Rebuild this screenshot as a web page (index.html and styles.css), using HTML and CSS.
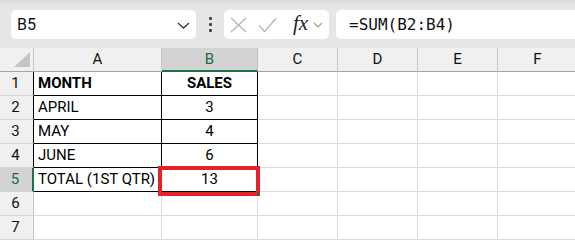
FILE: index.html
```html
<!DOCTYPE html>
<html>
<head>
<meta charset="utf-8">
<link rel="stylesheet" href="styles.css">
</head>
<body>
<div class="toolbar">
  <div class="namebox">
    <span class="name">B5</span>
    <svg class="chev" width="13" height="7" viewBox="0 0 13 7"><path d="M1 1 L6.5 6 L12 1" fill="none" stroke="#3a3a3a" stroke-width="1.3"/></svg>
  </div>
  <div class="dots"><span></span><span></span><span></span></div>
  <div class="fxbox">
    <svg class="ico" width="17" height="16" viewBox="0 0 17 16"><path d="M1 1 L16 15 M16 1 L1 15" stroke="#b4b4b4" stroke-width="1.3" fill="none"/></svg>
    <svg class="ico check" width="19" height="16" viewBox="0 0 19 16"><path d="M1 8.5 L6.5 14.5 L18 1.5" stroke="#b4b4b4" stroke-width="1.3" fill="none"/></svg>
    <span class="fx">fx</span>
    <svg class="chev2" width="10" height="6" viewBox="0 0 10 6"><path d="M1 1 L5 5 L9 1" fill="none" stroke="#9a9a9a" stroke-width="1.1"/></svg>
  </div>
  <div class="formula">=SUM(B2:B4)</div>
</div>
<div class="sheet">
  <div class="corner"><svg width="16" height="15" viewBox="0 0 16 15"><path d="M16 0 L16 15 L0 15 Z" fill="#c4c4c4"/></svg></div>
  <div class="ch">A</div>
  <div class="ch sel">B</div>
  <div class="ch">C</div>
  <div class="ch">D</div>
  <div class="ch">E</div>
  <div class="ch last">F</div>

  <div class="rh tb">1</div>
  <div class="c t a1 b">MONTH</div>
  <div class="c t b1 b ctr">SALES</div>
  <div class="c"></div><div class="c"></div><div class="c"></div><div class="c"></div>

  <div class="rh tb">2</div>
  <div class="c t">APRIL</div>
  <div class="c t ctr">3</div>
  <div class="c"></div><div class="c"></div><div class="c"></div><div class="c"></div>

  <div class="rh tb">3</div>
  <div class="c t">MAY</div>
  <div class="c t ctr">4</div>
  <div class="c"></div><div class="c"></div><div class="c"></div><div class="c"></div>

  <div class="rh tb">4</div>
  <div class="c t">JUNE</div>
  <div class="c t ctr">6</div>
  <div class="c"></div><div class="c"></div><div class="c"></div><div class="c"></div>

  <div class="rh rsel">5</div>
  <div class="c t">TOTAL (1ST QTR)</div>
  <div class="c t ctr active">13<span class="redbox"></span><span class="handle"></span></div>
  <div class="c"></div><div class="c"></div><div class="c"></div><div class="c"></div>

  <div class="rh">6</div>
  <div class="c"></div><div class="c"></div><div class="c"></div><div class="c"></div><div class="c"></div><div class="c"></div>

  <div class="rh">7</div>
  <div class="c"></div><div class="c"></div><div class="c"></div><div class="c"></div><div class="c"></div><div class="c"></div>
</div>
</body>
</html>
```
FILE: styles.css
```css
html, body {
  margin: 0;
  padding: 0;
  background: #ffffff;
  overflow: hidden;
}
body {
  width: 575px;
  height: 240px;
  font-family: Roboto, "Liberation Sans", sans-serif;
}
.toolbar {
  height: 48px;
  box-sizing: border-box;
  background: linear-gradient(#d9d7d9 0px, #e4e2e4 3px, #e7e5e7 6px, #e7e5e7 100%);
  display: flex;
  align-items: flex-start;
  padding: 10px 0 0 11px;
  overflow: hidden;
}
.namebox {
  width: 185px;
  height: 29px;
  box-sizing: border-box;
  background: #fff;
  border-radius: 5px;
  display: flex;
  align-items: center;
  justify-content: space-between;
  padding: 0 6px 0 6px;
}
.name {
  font-size: 16px;
  color: #111;
}
.chev { margin-top: 1px; }
.dots {
  width: 28px;
  height: 29px;
  display: flex;
  flex-direction: column;
  align-items: center;
  justify-content: center;
  gap: 3px;
}
.dots span {
  width: 3px;
  height: 3px;
  background: #444;
  border-radius: 1px;
}
.fxbox {
  width: 105px;
  height: 29px;
  box-sizing: border-box;
  background: #fff;
  border-radius: 5px;
  display: flex;
  align-items: center;
  padding-left: 6px;
}
.ico { display: block; }
.check { margin-left: 11px; }
.fx {
  font-family: "Liberation Serif", "DejaVu Serif", serif;
  font-style: italic;
  font-size: 21px;
  color: #222;
  margin-left: 16px;
  margin-top: -3px;
  letter-spacing: 0px;
}
.chev2 { margin-left: 5px; margin-top: 1px; }
.formula {
  flex: 1;
  margin-left: 7px;
  margin-right: -10px;
  height: 29px;
  background: #fff;
  border-radius: 5px;
  box-sizing: border-box;
  padding-left: 13px;
  font-family: "DejaVu Sans Mono", "Liberation Mono", monospace;
  font-size: 16px;
  line-height: 29px;
  color: #111;
}
.sheet {
  display: grid;
  grid-template-columns: 34px 128px 96px 80px 80px 80px 80px;
  grid-template-rows: repeat(8, 24px);
  font-size: 15px;
  color: #000;
}
.sheet > div {
  box-sizing: border-box;
}
.corner {
  background: #f0f0f0;
  border-right: 1px solid #c6c6c6;
  border-bottom: 1px solid #a3a3a3;
  display: flex;
  align-items: flex-end;
  justify-content: flex-end;
  padding: 0 3px 4px 0;
}
.corner svg { display: block; }
.ch {
  background: #f0f0f0;
  border-right: 1px solid #c6c6c6;
  border-bottom: 1px solid #a3a3a3;
  text-align: center;
  line-height: 23px;
  font-size: 15px;
  color: #111;
}
.ch.sel {
  background: #d3d3d3;
  color: #1e6b42;
  border-bottom: 2px solid #1e7145;
  border-right-color: #bdbdbd;
}
.rh {
  background: #f0f0f0;
  border-right: 1px solid #c6c6c6;
  border-bottom: 1px solid #d4d4d4;
  text-align: center;
  line-height: 23px;
  padding-right: 2px;
  font-size: 15px;
  color: #111;
}
.rh.tb { border-right-color: #000; }
.rh.rsel {
  background: #d3d3d3;
  color: #1e6b42;
  border-right: 2px solid #1e7145;
}
.c {
  border-right: 1px solid #dadada;
  border-bottom: 1px solid #dadada;
  line-height: 23px;
  padding-left: 4px;
  white-space: nowrap;
}
.c.t {
  border-right-color: #000;
  border-bottom-color: #000;
}
.b { font-weight: 700; }
.ctr { text-align: center; padding-left: 0; }
.active { position: relative; }
.redbox {
  position: absolute;
  left: -4px;
  top: -2px;
  width: 102px;
  height: 30px;
  box-sizing: border-box;
  border: 4px solid #e8202a;
}
.handle {
  position: absolute;
  right: -3px;
  bottom: -4px;
  width: 3px;
  height: 3px;
  background: #1e7145;
}
```
